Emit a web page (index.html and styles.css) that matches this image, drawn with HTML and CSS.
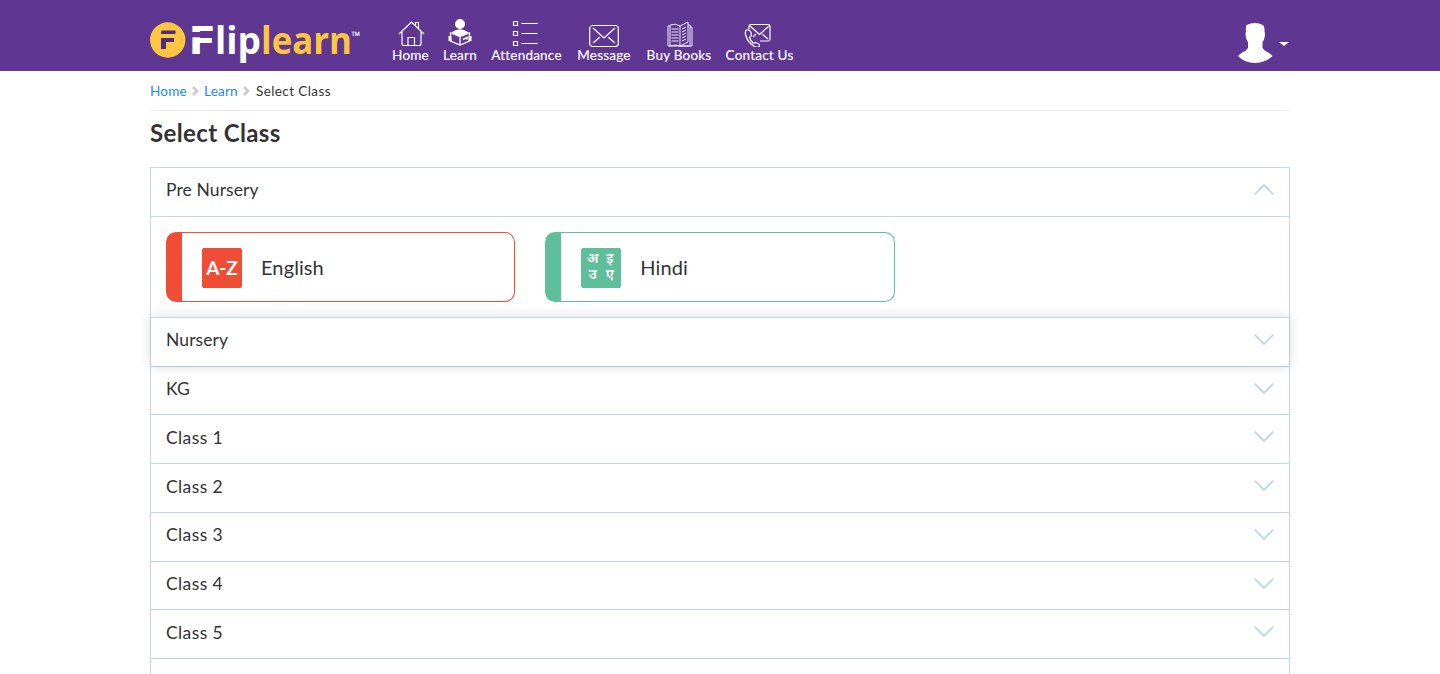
FILE: index.html
```
<!DOCTYPE html>
<html lang="en">
<head>
<meta charset="utf-8">
<title>Select Class</title>
<link rel="stylesheet" href="styles.css">
</head>
<body>
<header class="topbar">
  <div class="wrap topbar-inner">
    <svg class="logo" width="212" height="54" viewBox="0 0 212 54">
      <circle cx="17.700" cy="24" r="17.700" fill="#fcc640"/>
      <path d="M12 14.500h13.500v3.500H11v-2.500zM11 22h13v4h-8v7h-5z" fill="#4f2b80"/>
      <g class="logo-text">
        <text x="38" y="38" font-size="39" fill="#fff" textLength="27" lengthAdjust="spacingAndGlyphs">F</text>
        <path d="M39 16h28v5.300H39z" fill="#5f3692"/>
        <text x="65" y="38" font-size="38" fill="#fff" textLength="46" lengthAdjust="spacingAndGlyphs">lip</text>
        <text x="111" y="38" font-size="38" fill="#fcc640" textLength="91" lengthAdjust="spacingAndGlyphs">learn</text>
        <text x="201.500" y="23.500" font-size="12" fill="#fff" textLength="9" lengthAdjust="spacingAndGlyphs">™</text>
      </g>
    </svg>
    <nav class="nav">
      <a class="nav-item home"><svg width="28" height="28" viewBox="0 0 28 28"><path d="M2 15 14.500 3 27 15M5 13v11.500q0 2 2 2h15q2 0 2-2V13M11 26.500v-8h6.500v8M18.500 6V3.500h3V9"/></svg><span>Home</span></a>
      <a class="nav-item learn"><svg width="28" height="28" viewBox="0 0 28 28"><circle cx="14" cy="5" r="5" fill="#fff" stroke="none"/><path d="M6.500 13.500Q14 8 21.500 13.500L14 17z" fill="#fff"/><path d="m4.500 14 9.500 3.500 9.500-3.500v8L14 26l-9.500-4zM14 17.500V26" fill="#5f3692" stroke-width="1.300"/><path d="M4 17v5M24 17v5" stroke-width="3"/><path d="m17 20.500 4-2v2" stroke-width="1.600"/></svg><span>Learn</span></a>
      <a class="nav-item attendance"><svg class="shift-sm" width="28" height="28" viewBox="0 0 28 28"><path d="M1.500 2.500h4v4h-4zM1.500 12.500h4v4h-4zM1.500 22.500h4v4h-4zM9 4.500h17M9 14.500h17M9 24.500h17"/></svg><span>Attendance</span></a>
      <a class="nav-item message"><svg width="30" height="28" viewBox="0 0 30 28"><rect x=".7" y="6.500" width="28.600" height="21" rx="3"/><path d="m4 9 11 10L26 9M4 24l7-6M26 24l-7-6"/></svg><span>Message</span></a>
      <a class="nav-item books"><svg width="28" height="28" viewBox="0 0 28 28"><path d="M5 6q6-2 10 1v20q-4-2-10 0zM15 7l8-4v20l-8 4M23 6h2v21H15M5 7H3v20M25 8h2v19H3M6.500 10h7M6.500 13h7M6.500 16h7M6.500 19h7M6.500 22h7M17 10l4-2M17 13l4-2M17 16l4-2M17 19l4-2M17 22l4-2" stroke-width=".9"/></svg><span>Buy Books</span></a>
      <a class="nav-item contact"><svg class="shift" width="28" height="28" viewBox="0 0 28 28"><path d="M6 10V7q0-1.500 2-1.500h17q2 0 2 1.500v13.500q0 1.500-2 1.500h-8M7 7l9.500 8.500L26 7M19 15l6 5M13 15l-3 3"/><path d="M4.500 10.500q-3 1-2 5 2 8 9 12 4 2 5-1 0-2-4-3l-2 1q-3-3-4-6l2-2q0-5-4-6z"/></svg><span>Contact Us</span></a>
    </nav>
    <div class="account">
      <svg width="36" height="41" viewBox="0 0 36 41"><path d="M9.500 3Q18-1 26 3q2 2 1.500 7 1 1 0 6-1 3-2 4v6q2 3 5 4 3 2 5 4-7 7-17.500 7T1 34q2-2 5-4 3-1 5-4v-6q-1-1-2-4-1-5 0-6-.5-5 .5-7z" fill="#fff"/></svg>
      <i class="caret"></i>
    </div>
  </div>
</header>
<main class="wrap">
  <div class="crumbs">
    <a class="c-home">Home</a><svg class="sep" width="7" height="10" viewBox="0 0 7 10"><path d="m1 1 4 4-4 4"/></svg><a class="c-learn">Learn</a><svg class="sep" width="7" height="10" viewBox="0 0 7 10"><path d="m1 1 4 4-4 4"/></svg><span class="c-current">Select Class</span>
  </div>
  <h1 class="title">Select Class</h1>
  <div class="accordion">
    <section class="item">
      <div class="head"><span>Pre Nursery</span><svg class="chev up" width="20" height="11" viewBox="0 0 20 11"><path d="m.7.7 9.300 9.300L19.300.7"/></svg></div>
      <div class="panel">
        <a class="card english"><span class="tile az">A-Z</span><span class="label">English</span></a>
        <a class="card hindi"><span class="tile deva"><span>अ</span><span>इ</span><span>उ</span><span>ए</span></span><span class="label">Hindi</span></a>
      </div>
    </section>
    <section class="item raised"><div class="head"><span>Nursery</span><svg class="chev" width="20" height="11" viewBox="0 0 20 11"><path d="m.7.7 9.300 9.300L19.300.7"/></svg></div></section>
    <section class="item"><div class="head"><span>KG</span><svg class="chev" width="20" height="11" viewBox="0 0 20 11"><path d="m.7.7 9.300 9.300L19.300.7"/></svg></div></section>
    <section class="item"><div class="head"><span class="grade">Class 1</span><svg class="chev" width="20" height="11" viewBox="0 0 20 11"><path d="m.7.7 9.300 9.300L19.300.7"/></svg></div></section>
    <section class="item"><div class="head"><span class="grade">Class 2</span><svg class="chev" width="20" height="11" viewBox="0 0 20 11"><path d="m.7.7 9.300 9.300L19.300.7"/></svg></div></section>
    <section class="item"><div class="head"><span class="grade">Class 3</span><svg class="chev" width="20" height="11" viewBox="0 0 20 11"><path d="m.7.7 9.300 9.300L19.300.7"/></svg></div></section>
    <section class="item"><div class="head"><span class="grade">Class 4</span><svg class="chev" width="20" height="11" viewBox="0 0 20 11"><path d="m.7.7 9.300 9.300L19.300.7"/></svg></div></section>
    <section class="item"><div class="head"><span class="grade">Class 5</span><svg class="chev" width="20" height="11" viewBox="0 0 20 11"><path d="m.7.7 9.300 9.300L19.300.7"/></svg></div></section>
    <section class="item"><div class="head"></div></section>
  </div>
</main>
</body>
</html>
```
FILE: styles.css
```
* { box-sizing: border-box; }
html, body { height: 100%; }
body { margin: 0; overflow: hidden; background: #fff; color: #333; font-family: Lato, "Noto Sans", sans-serif; }
.wrap { width: 1140px; margin: 0 auto; }
.topbar { height: 71px; background: #5f3692; }
.topbar-inner { display: flex; align-items: flex-start; }
.logo { margin-top: 16px; flex: none; overflow: visible; }
.logo-text { font-family: "Open Sans", sans-serif; font-weight: 700; }
.nav { display: flex; gap: 14px; margin: 19px 0 0 30px; }
.nav-item { display: flex; flex-direction: column; align-items: center; color: #fff; font-size: 13.5px; letter-spacing: .22px; line-height: 16px; white-space: nowrap; -webkit-text-stroke: .15px #fff; }
.nav-item svg { fill: none; stroke: #fff; stroke-width: 1.2; }
.home { width: 37px; }
.learn { width: 34px; }
.attendance { width: 71px; }
.message { width: 56px; }
.books { width: 66px; }
.contact { width: 67px; }
.shift { margin-right: 6px; }
.shift-sm { margin-right: 2px; }
.account { display: flex; margin: 22px 1px 0 auto; }
.caret { margin: 20px 0 0 6px; border: 5px solid transparent; border-top: 4px solid #fff; border-bottom: 0; height: 4px; }
.crumbs { display: flex; align-items: center; height: 40px; border-bottom: 1px solid #ebebeb; border-radius: 4px; font-size: 13.5px; letter-spacing: .2px; }
.crumbs a { color: #1e88f0; }
.c-home { width: 37px; }
.c-learn { width: 34px; }
.c-current { margin-left: 1px; letter-spacing: .4px; }
.sep { margin: 1px 5px 0; fill: none; stroke: #ccc; stroke-width: 2.6; }
.title { margin: 6px 0 0; height: 50px; font-size: 24px; line-height: 31px; font-weight: 700; letter-spacing: .37px; }
.accordion { border: solid #c3d7e3; border-width: 0 1px; }
.item { border-top: 1px solid #c3d7e3; background: #fff; }
.raised { position: relative; box-shadow: 0 0 12px rgba(0, 0, 0, .15); }
.head { display: flex; justify-content: space-between; align-items: center; height: 47.75px; padding: 0 15px 4px; font-size: 17.5px; letter-spacing: .1px; }
.grade { letter-spacing: .4px; }
.chev { fill: none; stroke: #c3d7e3; stroke-width: 1.9; margin-bottom: 1px; }
.up { transform: scaleY(-1); }
.panel { display: flex; gap: 30px; height: 101.15px; padding: 15px; border-top: 1px solid #c3d7e3; }
.card { display: flex; align-items: center; width: 349.3px; height: 70px; border: 1px solid; border-left-width: 16px; border-radius: 10px; padding-left: 20px; }
.english { border-color: #ef4d35; }
.hindi { border-color: #60bf9b; }
.tile { width: 40px; height: 40px; margin-top: 2px; border-radius: 2px; color: #fff; }
.az { background: #ef4d35; font-size: 19px; font-weight: 700; line-height: 40px; text-align: center; }
.deva { display: grid; grid-template-columns: 17px 17px; grid-template-rows: 16px 16px; place-content: center; text-align: center; background: #60bf9b; font: 600 14px/16px "Noto Sans Devanagari", "Noto Sans", sans-serif; }
.label { margin: 1px 0 0 19px; font-size: 20px; letter-spacing: .1px; color: #333; }
```
